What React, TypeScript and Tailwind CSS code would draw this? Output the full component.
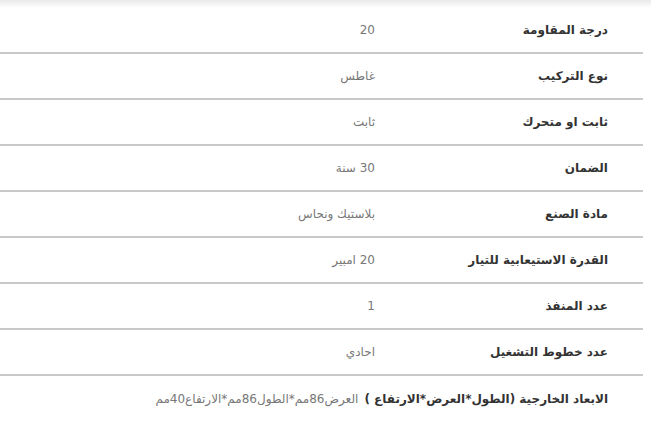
export default function App() {
  const rows = [
    { label: "درجة المقاومة", value: "20" },
    { label: "نوع التركيب", value: "غاطس" },
    { label: "ثابت او متحرك", value: "ثابت" },
    { label: "الضمان", value: "30 سنة" },
    { label: "مادة الصنع", value: "بلاستيك ونحاس" },
    { label: "القدرة الاستيعابية للتيار", value: "20 امبير" },
    { label: "عدد المنفذ", value: "1" },
    { label: "عدد خطوط التشغيل", value: "احادي" },
    {
      label: "الابعاد الخارجية (الطول*العرض*الارتفاع )",
      value: "العرض86مم*الطول86مم*الارتفاع40مم",
    },
  ];

  return (
    <div
      dir="rtl"
      className="w-[651px] h-[421px] overflow-hidden bg-white"
      style={{ fontFamily: '"DejaVu Sans", "Noto Sans", sans-serif' }}
    >
      {/* top shadow */}
      <div className="h-[8px] bg-gradient-to-b from-[#e9e9e9] to-white" />

      <div className="w-[643px] ml-0 mr-auto">
        {rows.map((r, i) => (
          <div
            key={i}
            className={`flex items-center h-[46px] ${
              i < rows.length - 1 ? "border-b-2 border-[#c9c9c9]" : ""
            }`}
          >
            <div className="min-w-[262px] shrink-0 pr-[35px] text-[12px] font-bold text-[#333] whitespace-nowrap">
              {r.label}
            </div>
            <div className="pr-[6px] text-[12px] text-[#777] whitespace-nowrap">
              {r.value}
            </div>
          </div>
        ))}
      </div>
    </div>
  );
}
